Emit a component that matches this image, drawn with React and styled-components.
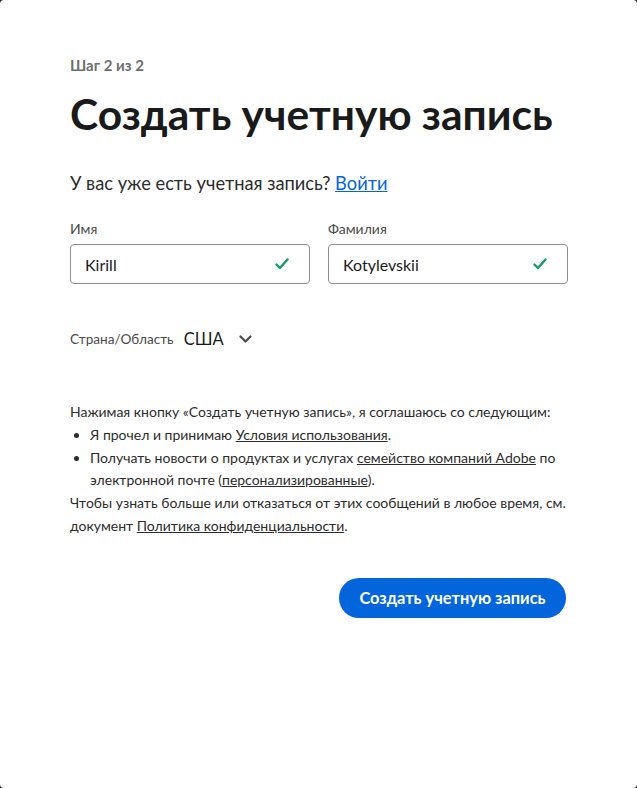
import React from "react";
import styled, { createGlobalStyle } from "styled-components";

const GlobalStyle = createGlobalStyle`
  html, body {
    margin: 0;
    padding: 0;
    background: #1e1e1e;
  }
  body {
    font-family: Lato, "Open Sans", sans-serif;
    color: #2c2c2c;
  }
`;

const Card = styled.div`
  box-sizing: border-box;
  width: 637px;
  height: 788px;
  background: #fff;
  border-radius: 4px;
  padding: 54px 70px 0 70px;
`;

const Step = styled.div`
  font-size: 15px;
  font-weight: 700;
  color: #6e6e6e;
  line-height: 22px;
`;

const Title = styled.h1`
  margin: 12px 0 0;
  font-size: 42.5px;
  font-weight: 700;
  line-height: 52px;
  color: #1a1a1a;
`;

const HaveAccount = styled.p`
  margin: 30px 0 0;
  font-size: 18.3px;
  line-height: 26px;
`;

const Link = styled.a`
  color: #0265dc;
  text-decoration: underline;
  cursor: pointer;
`;

const NameRow = styled.div`
  display: grid;
  grid-template-columns: 240px 240px;
  column-gap: 18px;
  margin-top: 24px;
`;

const Field = styled.div`
  display: flex;
  flex-direction: column;
  gap: 6px;
`;

const Label = styled.label`
  font-size: 14px;
  line-height: 18px;
  color: #4b4b4b;
`;

const InputBox = styled.div`
  box-sizing: border-box;
  height: 40px;
  border: 1px solid #8e8e8e;
  border-radius: 4px;
  display: flex;
  align-items: center;
  justify-content: space-between;
  padding: 0 20px 0 14px;
  font-size: 16px;
  color: #1a1a1a;
`;

const CountryRow = styled.div`
  display: flex;
  align-items: center;
  margin-top: 43px;
  height: 24px;
`;

const CountryLabel = styled.span`
  font-size: 13.6px;
  color: #4b4b4b;
  margin-right: 10px;
`;

const CountryValue = styled.span`
  font-size: 16.5px;
  color: #1a1a1a;
  margin-right: 15px;
`;

const Legal = styled.div`
  margin-top: 50px;
  font-size: 14px;
  line-height: 22.8px;
  color: #2c2c2c;
`;

const List = styled.ul`
  margin: 0;
  padding-left: 20px;
`;

const Underlined = styled.a`
  color: inherit;
  text-decoration: underline;
`;

const Actions = styled.div`
  display: flex;
  justify-content: flex-end;
  margin-top: 40px;
  padding-right: 1px;
`;

const Button = styled.button`
  height: 40px;
  border: none;
  border-radius: 20px;
  background: #0265dc;
  color: #fff;
  font-family: inherit;
  font-size: 16.4px;
  font-weight: 700;
  padding: 0 20.5px;
  cursor: pointer;
`;

const Check = () => (
  <svg width="14" height="12" viewBox="0 0 14 12">
    <path
      d="M1.5 6.5 L5 10 L12.5 1.5"
      fill="none"
      stroke="#16996a"
      strokeWidth="2.4"
      strokeLinecap="round"
      strokeLinejoin="round"
    />
  </svg>
);

const Chevron = () => (
  <svg width="13" height="8" viewBox="0 0 13 8">
    <path
      d="M1.5 1.5 L6.5 6.5 L11.5 1.5"
      fill="none"
      stroke="#4b4b4b"
      strokeWidth="2.2"
      strokeLinecap="round"
      strokeLinejoin="round"
    />
  </svg>
);

export default function App() {
  return (
    <>
      <GlobalStyle />
      <Card>
        <Step>Шаг 2 из 2</Step>
        <Title>Создать учетную запись</Title>
        <HaveAccount>
          У вас уже есть учетная запись? <Link>Войти</Link>
        </HaveAccount>
        <NameRow>
          <Field>
            <Label>Имя</Label>
            <InputBox>
              Kirill
              <Check />
            </InputBox>
          </Field>
          <Field>
            <Label>Фамилия</Label>
            <InputBox>
              Kotylevskii
              <Check />
            </InputBox>
          </Field>
        </NameRow>
        <CountryRow>
          <CountryLabel>Страна/Область</CountryLabel>
          <CountryValue>США</CountryValue>
          <Chevron />
        </CountryRow>
        <Legal>
          Нажимая кнопку «Создать учетную запись», я соглашаюсь со следующим:
          <List>
            <li>
              Я прочел и принимаю <Underlined>Условия использования</Underlined>.
            </li>
            <li>
              Получать новости о продуктах и услугах{" "}
              <Underlined>семейство компаний Adobe</Underlined> по электронной
              почте (<Underlined>персонализированные</Underlined>).
            </li>
          </List>
          Чтобы узнать больше или отказаться от этих сообщений в любое время,
          см. документ <Underlined>Политика конфиденциальности</Underlined>.
        </Legal>
        <Actions>
          <Button>Создать учетную запись</Button>
        </Actions>
      </Card>
    </>
  );
}
